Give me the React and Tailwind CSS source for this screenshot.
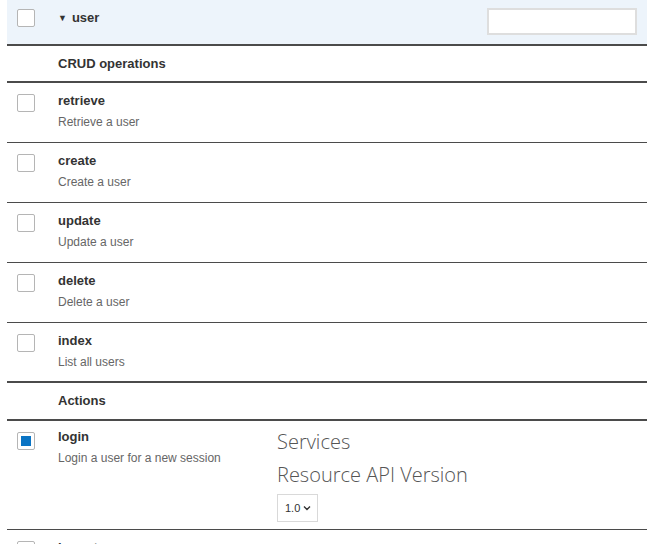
const crud = [
  { name: "retrieve", desc: "Retrieve a user" },
  { name: "create", desc: "Create a user" },
  { name: "update", desc: "Update a user" },
  { name: "delete", desc: "Delete a user" },
  { name: "index", desc: "List all users" },
]

function Box({ checked = false }) {
  return (
    <div className="w-[18px] h-[18px] shrink-0 rounded-[2px] border border-[#b5b5b5] bg-white flex items-center justify-center">
      {checked && <div className="w-[10px] h-[10px] bg-[#0a74c4]" />}
    </div>
  )
}

function Section({ title, h }) {
  return (
    <div className={`${h} flex items-center pl-[51px] border-b-2 border-[#4b4b4b]`}>
      <span className="text-[13px] font-bold text-[#333]">{title}</span>
    </div>
  )
}

function Row({ name, desc, last, checked }) {
  return (
    <div className={`flex pl-[10px] h-[60px] ${last ? "border-b-2" : "border-b"} border-[#4b4b4b]`}>
      <div className="pt-[11px]">
        <Box checked={checked} />
      </div>
      <div className="ml-[23px] pt-[10px] w-[196px]">
        <div className="text-[13px] leading-[16px] font-bold text-[#333]">{name}</div>
        <div className="mt-[5px] text-[12px] leading-[16px] text-[#666]">{desc}</div>
      </div>
    </div>
  )
}

export default function App() {
  return (
    <div className="w-[656px] h-[544px] overflow-hidden bg-white" style={{ fontFamily: "'Liberation Sans', Arial, sans-serif" }}>
      <div className="ml-[7px] w-[640px]">
        <div className="h-[46px] bg-[#edf4fb] border-b-2 border-[#4b4b4b] flex items-start pl-[10px] pr-[10px]">
          <div className="pt-[9px]">
            <Box />
          </div>
          <div className="ml-[23px] pt-[9px] flex items-center gap-[5px] text-[13px] leading-[18px] font-bold text-[#333]">
            <span className="text-[9px]">▼</span>
            <span>user</span>
          </div>
          <input className="ml-auto mt-[8px] w-[150px] h-[27px] border-2 border-[#dedede] bg-white outline-none" />
        </div>
        <Section title="CRUD operations" h="h-[37px]" />
        {crud.map((r, i) => (
          <Row key={r.name} name={r.name} desc={r.desc} last={i === crud.length - 1} />
        ))}
        <Section title="Actions" h="h-[38px]" />
        <div className="flex pl-[10px] border-b border-[#4b4b4b] h-[109px]">
          <div className="pt-[11px]">
            <Box checked />
          </div>
          <div className="ml-[23px] pt-[8px] w-[219px]">
            <div className="text-[13px] leading-[16px] font-bold text-[#333]">login</div>
            <div className="mt-[5px] text-[12px] leading-[16px] text-[#666]">Login a user for a new session</div>
          </div>
          <div className="pt-[7px] text-[#555]" style={{ fontFamily: "'Open Sans', sans-serif" }}>
            <div className="text-[20px] leading-[28px] font-light">Services</div>
            <div className="mt-[5px] text-[20px] leading-[28px] font-light">Resource API Version</div>
            <div className="mt-[5px] w-[41px] h-[28px] border border-[#d9d9d9] flex items-center pl-[7px] gap-[3px] text-[11px] text-[#333]">
              <span style={{ fontFamily: "'Liberation Sans', sans-serif" }}>1.0</span>
              <svg width="8" height="6" viewBox="0 0 8 6" fill="none" stroke="#333" strokeWidth="1.4">
                <path d="M1 1.5l3 3 3-3" />
              </svg>
            </div>
          </div>
        </div>
        <div className="flex pl-[10px]">
          <div className="pt-[11px]">
            <Box />
          </div>
          <div className="ml-[23px] pt-[10px] text-[13px] leading-[16px] font-bold text-[#333]">logout</div>
        </div>
      </div>
    </div>
  )
}
